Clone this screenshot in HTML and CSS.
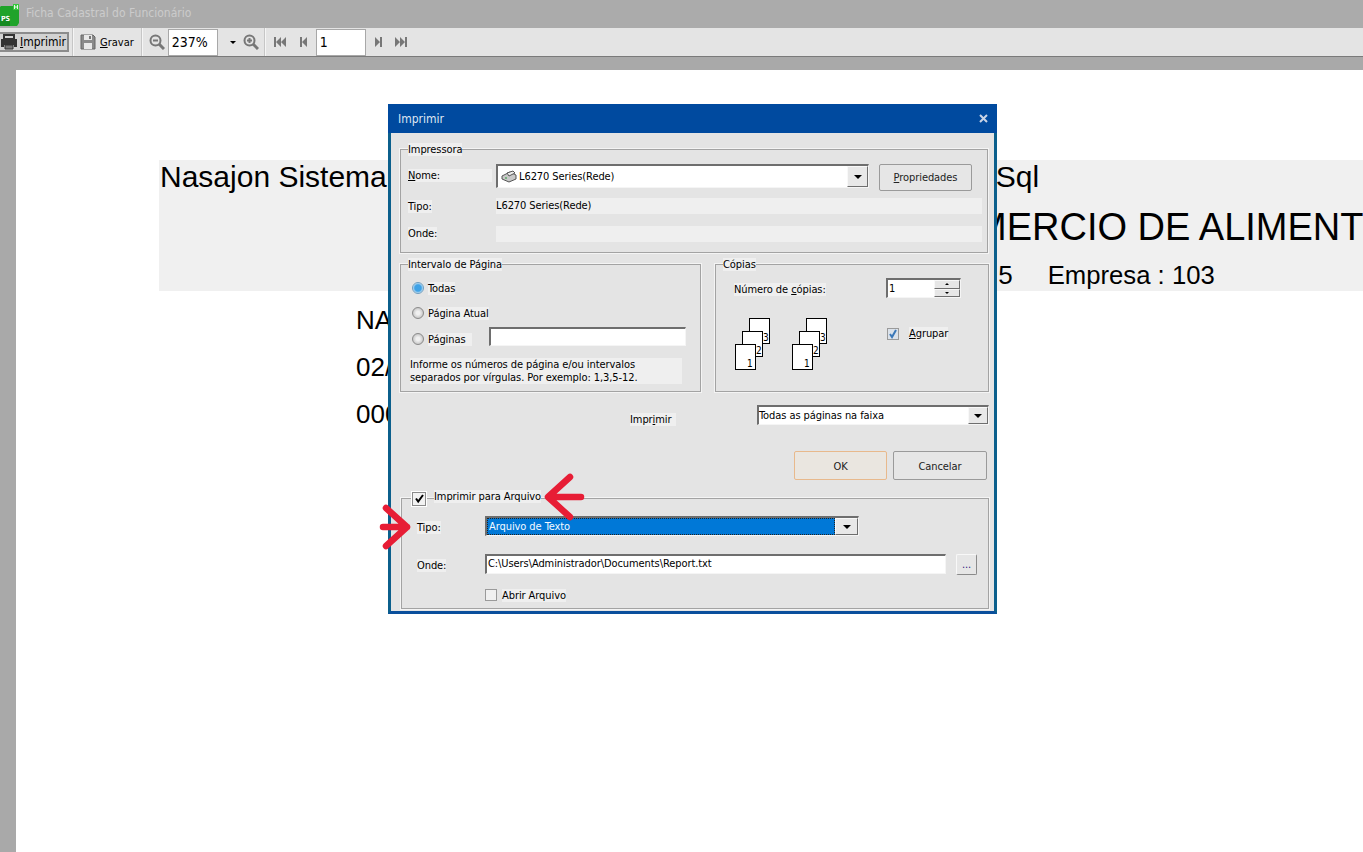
FILE: index.html
```html
<!DOCTYPE html>
<html lang="pt-br">
  <head>
    <meta charset="UTF-8" />
    <title>Ficha Cadastral do Funcionário</title>
    <link rel="stylesheet" href="styles.css">
  </head>
  <body>
    <header class="app-title">
      <svg class="app-logo" width="20" height="22" viewBox="0 0 20 22">
        <path d="M1 2h17l1 1v16l-2 3H0V3z" fill="#1fa32a"/>
        <path d="M13 0h6v6h-6z" fill="#37c83f"/>
        <path d="M14 1h1v4h-1zM17 1h1v4h-1zM15 2.500h2v1h-2z" fill="#e8f8e8"/>
        <path d="M0 13h10v9H0z" fill="#158a20"/>
      </svg>
      <span class="app-logo-text">PS</span>
      <span class="app-name">Ficha Cadastral do Funcionário</span>
    </header>

    <nav class="toolbar">
      <button class="tool tool-on">
        <svg width="18" height="16" viewBox="0 0 18 16"><path d="M4 1h10v4H4z" fill="none" stroke="#333" stroke-width="2"/><path d="M1 5h16v8h-3v-2H4v2H1z" fill="#333"/><path d="M5 11h8v4H5z" fill="#777" stroke="#333"/></svg>
        <span><u>I</u>mprimir</span>
      </button>
      <i class="sep"></i>
      <button class="tool tool-save">
        <svg width="16" height="16" viewBox="0 0 16 16"><path d="M1 1h12l2 2v12H1z" fill="#8a8a8a" stroke="#666"/><path d="M4 1h8v5H4z" fill="#e8e8e8"/><path d="M9 2h2v3H9z" fill="#777"/><path d="M4 9h8v6H4z" fill="#e8e8e8"/></svg>
        <span><u>G</u>ravar</span>
      </button>
      <i class="sep"></i>
      <svg class="icon-zoom-out" width="16" height="16" viewBox="0 0 16 16"><circle cx="6.500" cy="6.500" r="5" fill="none" stroke="#777" stroke-width="2"/><path d="M10 10l5 5" stroke="#777" stroke-width="3"/><path d="M4 6.500h5" stroke="#777" stroke-width="2"/></svg>
      <span class="tool-input zoom-input">237%</span>
      <i class="tri tri-tool"></i>
      <svg class="icon-zoom-in" width="16" height="16" viewBox="0 0 16 16"><circle cx="6.500" cy="6.500" r="5" fill="none" stroke="#777" stroke-width="2"/><path d="M10 10l5 5" stroke="#777" stroke-width="3"/><path d="M4 6.500h5M6.500 4v5" stroke="#777" stroke-width="2"/></svg>
      <i class="sep sep-nav"></i>
      <svg class="icon-first" width="12" height="12" viewBox="0 0 12 12"><path d="M0 1h2v10H0zM7 1v10L2 6zM12 1v10L7 6z" fill="#777"/></svg>
      <svg class="icon-prev" width="7" height="12" viewBox="0 0 7 12"><path d="M0 1h2v10H0zM7 1v10L2 6z" fill="#777"/></svg>
      <span class="tool-input page-input">1</span>
      <svg class="icon-next" width="7" height="12" viewBox="0 0 7 12"><path d="M5 1h2v10H5zM0 1v10l5-5z" fill="#777"/></svg>
      <svg class="icon-last" width="12" height="12" viewBox="0 0 12 12"><path d="M10 1h2v10h-2zM5 1v10l5-5zM0 1v10l5-5z" fill="#777"/></svg>
    </nav>

    <main class="viewer">
      <div class="sheet">
        <div class="report-head">
          <p class="line-sistema">Nasajon Sistema<span class="sql">Sql</span></p>
          <p class="line-empresa">MERCIO DE ALIMENT</p>
          <p class="line-codigo"><span>.5</span><span class="empresa">Empresa : 103</span></p>
        </div>
        <p class="report-line first">NA</p>
        <p class="report-line">02/</p>
        <p class="report-line">000</p>
      </div>
    </main>

    <section class="dialog">
      <div class="dialog-title">
        <span>Imprimir</span>
        <svg width="9" height="9" viewBox="0 0 9 9"><path d="M1 1l7 7M8 1L1 8" stroke="#c9d4e6" stroke-width="2"/></svg>
      </div>
      <div class="dialog-body">

        <div class="group group-printer">
          <span class="legend">Impressora</span>
          <div class="row row-name">
            <label class="lbl lbl-name"><u>N</u>ome:</label>
            <div class="combo combo-printer">
              <svg class="mini-printer" width="16" height="13" viewBox="0 0 16 13"><path d="M1 6l8-4 6 3v4l-7 3-7-3z" fill="#c8c8c8" stroke="#555"/><path d="M6 3l6-2 2 2-6 3z" fill="#eee" stroke="#555"/><path d="M4 8h2" stroke="#2a9a3a"/></svg>
              <span class="combo-text">L6270 Series(Rede)</span>
              <span class="combo-btn"><i class="tri"></i></span>
            </div>
            <button class="btn btn-props"><u>P</u>ropriedades</button>
          </div>
          <div class="row row-info">
            <span class="info-name"><span class="lbl">Tipo:</span></span>
            <span class="info">L6270 Series(Rede)</span>
          </div>
          <div class="row row-info row-where">
            <span class="info-name"><span class="lbl lbl-where">Onde:</span></span>
            <span class="info"></span>
          </div>
        </div>

        <div class="group-pair">
          <div class="group group-range">
            <span class="legend">Intervalo de Página</span>
            <div class="radio-row"><i class="radio radio-on"></i><span class="lbl">Todas</span></div>
            <div class="radio-row"><i class="radio"></i><span class="lbl">Página Atual</span></div>
            <div class="radio-row radio-pages">
              <i class="radio"></i><span class="lbl lbl-pages">Páginas</span>
              <span class="field field-pages"></span>
            </div>
            <p class="hint">Informe os números de página e/ou intervalos<br>separados por vírgulas. Por exemplo: 1,3,5-12.</p>
          </div>

          <div class="group group-copies">
            <span class="legend">Cópias</span>
            <div class="copies-top">
              <span class="lbl">Número de <u>c</u>ópias:</span>
              <div class="spin">
                <span class="spin-val">1</span>
                <span class="spin-btns">
                  <b><i class="tri tri-up"></i></b>
                  <b><i class="tri tri-small"></i></b>
                </span>
              </div>
            </div>
            <div class="copies-low">
              <svg class="stack" width="36" height="53" viewBox="0 0 36 53">
                <g fill="#fff" stroke="#000">
                  <rect x="14.500" y="0.500" width="20" height="25"/>
                  <rect x="7.500" y="13.500" width="20" height="25"/>
                  <rect x="0.500" y="26.500" width="20" height="25"/>
                </g>
                <g class="stack-num"><text x="28" y="23">3</text><text x="21" y="36">2</text><text x="12" y="49">1</text></g>
              </svg>
              <svg class="stack" width="36" height="53" viewBox="0 0 36 53">
                <g fill="#fff" stroke="#000">
                  <rect x="14.500" y="0.500" width="20" height="25"/>
                  <rect x="7.500" y="13.500" width="20" height="25"/>
                  <rect x="0.500" y="26.500" width="20" height="25"/>
                </g>
                <g class="stack-num"><text x="28" y="23">3</text><text x="21" y="36">2</text><text x="12" y="49">1</text></g>
              </svg>
              <i class="check check-blue"><svg width="10" height="10" viewBox="0 0 10 10"><path d="M2 5l2 3 4-7" fill="none" stroke="#3b78b8" stroke-width="2"/></svg></i>
              <span class="lbl lbl-group"><u>A</u>grupar</span>
            </div>
          </div>
        </div>

        <div class="row row-scope">
          <span class="lbl lbl-scope">Impr<u>i</u>mir</span>
          <div class="combo combo-scope">
            <span class="combo-text">Todas as páginas na faixa</span>
            <span class="combo-btn"><i class="tri"></i></span>
          </div>
        </div>

        <div class="row row-actions">
          <button class="btn btn-ok">OK</button>
          <button class="btn btn-cancel">Cancelar</button>
        </div>

        <div class="group group-file">
          <div class="legend legend-check">
            <i class="check check-main"><svg width="11" height="11" viewBox="0 0 11 11"><path d="M2 5.500l2.200 3L9 2" fill="none" stroke="#000" stroke-width="2"/></svg></i>
            <span class="legend-text">Imprimir para Arquivo</span>
          </div>
          <div class="row row-file-type">
            <span class="lbl-file"><span class="lbl">Tipo:</span></span>
            <div class="combo combo-type">
              <span class="combo-text combo-selected">Arquivo de Texto</span>
              <span class="combo-btn"><i class="tri"></i></span>
            </div>
          </div>
          <div class="row row-file-path">
            <span class="lbl-file lbl-file-path"><span class="lbl">Onde:</span></span>
            <span class="field field-path">C:\Users\Administrador\Documents\Report.txt</span>
            <button class="btn btn-browse">...</button>
          </div>
          <div class="row row-open">
            <i class="check"></i>
            <span class="lbl">Abrir Arquivo</span>
          </div>
        </div>
      </div>
    </section>

    <svg class="arrow arrow-top" width="48" height="48" viewBox="0 0 48 48">
      <path d="M39 24H7M28 4L6 24l22 20" fill="none" stroke="#e71d35" stroke-width="6.500" stroke-linecap="round" stroke-linejoin="round"/>
    </svg>
    <svg class="arrow arrow-left" width="40" height="50" viewBox="0 0 40 50">
      <path d="M7 25h24M10 6l21 19-21 19" fill="none" stroke="#e71d35" stroke-width="6.500" stroke-linecap="round" stroke-linejoin="round"/>
    </svg>
  </body>
</html>
```

FILE: styles.css
```css
* {
  box-sizing: border-box;
}

html,
body {
  margin: 0;
  height: 852px;
  overflow: hidden;
}

body {
  position: relative;
  background: #a9a9a9;
  font-family: "DejaVu Sans Condensed", "DejaVu Sans", sans-serif;
  font-size: 11px;
  color: #000;
}

p {
  margin: 0;
}

u {
  text-underline-offset: 1px;
}

/* barra do aplicativo */
.app-title {
  position: relative;
  height: 28px;
  background: #ababab;
  display: flex;
  align-items: center;
}

.app-logo {
  margin-top: 1px;
  flex: none;
}

.app-logo-text {
  position: absolute;
  left: 1px;
  top: 15px;
  font-size: 7px;
  line-height: 8px;
  font-weight: bold;
  color: #fff;
}

.app-name {
  margin-left: 6px;
  margin-top: -2px;
  font-size: 12px;
  color: #cbcbcb;
}

.toolbar {
  height: 29px;
  background: #e4e4e4;
  border-bottom: 1px solid #7a7a7a;
  display: flex;
  align-items: center;
  font-size: 12px;
}

.tool {
  font: inherit;
  color: #000;
  background: none;
  border: 0;
  padding: 0;
  height: 20px;
  display: flex;
  align-items: center;
  gap: 3px;
}

.tool-on {
  width: 69px;
  background: #d2d2d2;
  border: 2px solid #8c8c8c;
  border-left: 0;
  gap: 2px;
}

.tool-save {
  margin-left: 6px;
  gap: 4px;
  font-size: 11px;
}

.sep {
  height: 28px;
  background: #c6c6c6;
  border-right: 1px solid #f5f5f5;
  margin-left: 3px;
  flex: none;
  width: 2px;
}

.tool-save + .sep {
  margin-left: 7px;
}

.icon-zoom-out {
  margin-left: 6px;
}

.tool-input {
  background: #fff;
  border: 1px solid #a8a8a8;
  width: 50px;
  height: 27px;
  font-size: 14px;
  line-height: 25px;
  padding-left: 3px;
  flex: none;
}

.zoom-input {
  margin-left: 3px;
}

.tri {
  display: block;
  width: 0;
  height: 0;
  border-left: 4px solid transparent;
  border-right: 4px solid transparent;
  border-top: 4px solid #000;
}

.tri-tool {
  margin-left: 12px;
  border-width: 3px 3px 0;
  border-left: 3px solid transparent;
  border-right: 3px solid transparent;
}

.icon-zoom-in {
  margin-left: 7px;
}

.sep-nav {
  margin-left: 5px;
}

.icon-first {
  margin-left: 8px;
}

.icon-prev {
  margin-left: 14px;
}

.page-input {
  margin-left: 9px;
}

.icon-next {
  margin-left: 9px;
}

.icon-last {
  margin-left: 13px;
}

/* relatorio ao fundo */
.viewer {
  padding: 13px 0 0 16px;
}

.sheet {
  background: #fff;
  height: 782px;
  padding-top: 90px;
  font-family: "Liberation Sans", sans-serif;
  white-space: nowrap;
}

.report-head {
  margin-left: 143px;
  height: 131px;
  background: #f0f0f0;
  overflow: hidden;
  position: relative;
}

.line-sistema {
  font-size: 30px;
  line-height: 34px;
  padding-left: 1px;
}

.sql {
  margin-left: 609px;
}

.line-empresa {
  font-size: 38px;
  line-height: 43px;
  margin: 12px 0 0 816px;
}

.line-codigo {
  font-size: 26px;
  line-height: 30px;
  margin: 11px 0 0 832px;
}

.empresa {
  margin-left: 35px;
  font-size: 25.7px;
}

.report-line {
  margin-left: 340px;
  font-size: 26px;
  line-height: 30px;
  margin-bottom: 17px;
}

.report-line.first {
  margin-top: 14px;
}

/* dialogo */
.dialog {
  position: absolute;
  left: 388px;
  top: 104px;
  width: 609px;
  height: 510px;
  background: #004a9f;
}

.dialog-title {
  height: 29px;
  padding: 0 9px 0 10px;
  display: flex;
  align-items: center;
  justify-content: space-between;
  font-size: 12px;
  color: #dfe6f2;
}

.dialog-body {
  height: 481px;
  background: #e4e4e4;
  border: solid #0b5f8c;
  border-width: 0 3px 3px;
  border-bottom-color: #0a4f9c;
  padding: 16px 0 0 9px;
  letter-spacing: -0.08px;
}

.group {
  position: relative;
  border: 1px solid #a3a3a3;
  box-shadow: 0 0 0 1px #f4f4f4;
}

.legend {
  position: absolute;
  left: 7px;
  top: -7px;
  height: 13px;
  line-height: 13px;
  background: #efefef;
}

.lbl {
  display: inline-block;
  background: #efefef;
  line-height: 13px;
  height: 13px;
  white-space: nowrap;
}

.row {
  display: flex;
  align-items: center;
}

.group-printer {
  width: 588px;
  height: 104px;
  padding: 14px 0 0 7px;
}

.row-name {
  align-items: flex-start;
}

.lbl-name {
  width: 84px;
  margin: 5px 4px 0 0;
  flex: none;
}

.info-name {
  display: flex;
  width: 88px;
  flex: none;
}

.lbl-where {
  margin-top: -2px;
}

.combo {
  position: relative;
  display: flex;
  align-items: center;
  height: 24px;
  background: #fff;
  border: 1px solid;
  border-width: 2px 1px 1px 2px;
  border-color: #6e6e6e #f5f5f5 #f5f5f5 #6e6e6e;
  flex: none;
}

.combo-printer {
  width: 373px;
  padding-left: 3px;
}

.mini-printer {
  margin-right: 2px;
}

.combo-btn {
  margin-left: auto;
  width: 21px;
  height: 100%;
  background: #e8e8e8;
  border: 1px solid;
  border-color: #f8f8f8 #6e6e6e #6e6e6e #f8f8f8;
  display: flex;
  align-items: center;
  justify-content: center;
  flex: none;
}

.btn {
  font: inherit;
  letter-spacing: inherit;
  color: #222;
  background: #e6e6e6;
  border: 1px solid #9a9a9a;
  border-radius: 2px;
  padding: 0;
}

.btn-props {
  width: 93px;
  height: 27px;
  margin-left: 10px;
}

.row-info {
  height: 16px;
  margin-top: 7px;
}

.row-where {
  margin-top: 12px;
}

.info {
  flex: none;
  width: 486px;
  height: 16px;
  line-height: 16px;
  background: #efefef;
}

.group-pair {
  display: flex;
  gap: 14px;
  margin-top: 11px;
}

.group-range {
  width: 301px;
  height: 128px;
  padding: 16px 0 0 11px;
}

.radio-row {
  display: flex;
  align-items: center;
  gap: 4px;
  height: 14px;
  margin-bottom: 11px;
}

.radio {
  flex: none;
  width: 12px;
  height: 12px;
  border-radius: 50%;
  border: 1px solid #8a8a8a;
  background: radial-gradient(circle, #f0f0f0 25%, #bdbdbd 85%);
}

.radio-on {
  border-color: #6f9dbf;
  background: radial-gradient(circle, #3fa2e6 45%, #d2e8f6 75%);
}

.radio-pages {
  margin-bottom: 0;
  margin-top: 12px;
}

.lbl-pages {
  width: 44px;
  flex: none;
}

.field {
  display: block;
  background: #fff;
  border: 1px solid;
  border-width: 2px 1px 1px 2px;
  border-color: #6e6e6e #f5f5f5 #f5f5f5 #6e6e6e;
  line-height: 15px;
}

.field-pages {
  width: 197px;
  height: 19px;
  margin: -5px 0 0 13px;
  flex: none;
}

.hint {
  width: 272px;
  height: 26px;
  margin: 12px 0 0 -2px;
  background: #efefef;
  line-height: 13px;
  white-space: nowrap;
}

.group-copies {
  width: 274px;
  height: 128px;
  padding: 13px 0 0 18px;
}

.copies-top {
  display: grid;
  grid-template-columns: 152px 75px;
  align-items: center;
  height: 20px;
}

.copies-top .lbl {
  justify-self: start;
  margin-top: 2px;
}

.spin {
  display: flex;
  height: 20px;
  background: #fff;
  border: 1px solid;
  border-width: 2px 1px 1px 2px;
  border-color: #6e6e6e #f5f5f5 #f5f5f5 #6e6e6e;
}

.spin-val {
  flex: 1;
  line-height: 17px;
  padding-left: 1px;
}

.spin-btns {
  width: 26px;
  display: flex;
  flex-direction: column;
}

.spin-btns b {
  flex: 1;
  background: #e6e6e6;
  border: 1px solid;
  border-color: #f8f8f8 #6e6e6e #6e6e6e #f8f8f8;
  display: flex;
  align-items: center;
  justify-content: center;
}

.tri-small,
.tri-up {
  border-width: 2px 2px 0;
  border-left: 2px solid transparent;
  border-right: 2px solid transparent;
}

.tri-up {
  border-top: 0;
  border-bottom: 2px solid #000;
}

.copies-low {
  display: flex;
  align-items: center;
  margin: 20px 0 0 1px;
}

.stack {
  margin-right: 21px;
  flex: none;
}

.stack-num {
  font-size: 10px;
}

.check {
  display: flex;
  align-items: center;
  justify-content: center;
  flex: none;
  width: 12px;
  height: 12px;
  background: #f0f0f0;
  border: 1px solid #9a9a9a;
}

.check-blue {
  margin: -22px 10px 0 38px;
  background: #dbe2ea;
}

.lbl-group {
  margin-top: -23px;
}

.row-scope {
  margin-top: 13px;
  height: 20px;
}

.lbl-scope {
  margin: 8px 0 0 230px;
  width: 46px;
  flex: none;
}

.combo-scope {
  width: 232px;
  height: 20px;
  margin-left: 81px;
}

.combo-scope .combo-btn {
  width: 20px;
}

.row-actions {
  margin: 26px 0 0 394px;
  gap: 6px;
}

.btn-ok,
.btn-cancel {
  height: 29px;
  width: 93px;
  padding-top: 1px;
}

.btn-ok {
  border-color: #e8b98c;
  background: #eae6e0;
}

.btn-cancel {
  width: 94px;
}

.group-file {
  width: 588px;
  height: 111px;
  margin: 18px 0 0 1px;
  padding: 17px 0 0 15px;
}

.legend-check {
  left: 9px;
  top: -9px;
  height: 17px;
  background: none;
  display: flex;
  align-items: center;
}

.check-main {
  width: 16px;
  height: 16px;
  background: #f2f2f2;
  border: 1px solid #fff;
  box-shadow: inset 0 0 0 1px #8a8a8a;
}

.legend-text {
  margin: -5px 0 0 7px;
  background: #efefef;
  line-height: 13px;
  height: 13px;
  white-space: nowrap;
}

.lbl-file {
  display: flex;
  width: 68px;
  flex: none;
  padding-top: 2px;
}

.lbl-file-path {
  padding-top: 4px;
}

.combo-type {
  width: 374px;
  height: 20px;
}

.combo-selected {
  flex: 1;
  height: 100%;
  background: #0078d7;
  color: #f4f8ff;
  line-height: 17px;
  padding-left: 2px;
  outline: 1px dotted #222;
  outline-offset: -1px;
}

.combo-type .combo-btn {
  width: 23px;
}

.row-file-path {
  margin-top: 17px;
  height: 21px;
}

.field-path {
  width: 461px;
  height: 20px;
  padding-left: 1px;
  white-space: nowrap;
}

.btn-browse {
  width: 21px;
  height: 21px;
  margin: 2px 0 0 10px;
  border-color: #f8f8f8 #8a8a8a #8a8a8a #f8f8f8;
  color: #302080;
}

.row-open {
  margin: 14px 0 0 68px;
  height: 14px;
  gap: 5px;
}

/* setas vermelhas */
.arrow {
  position: absolute;
}

.arrow-top {
  left: 542px;
  top: 473px;
}

.arrow-left {
  left: 376px;
  top: 502px;
}
```
